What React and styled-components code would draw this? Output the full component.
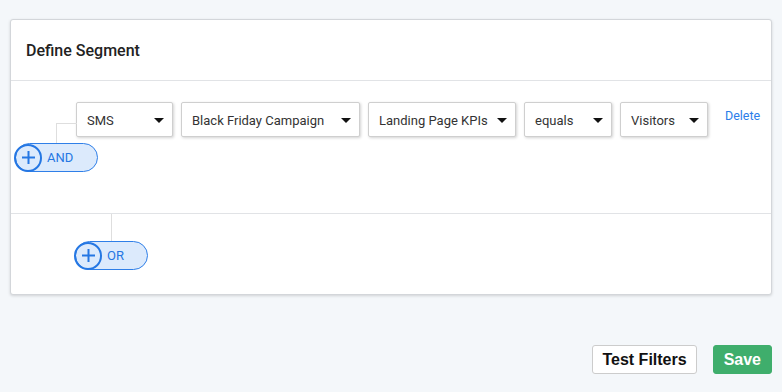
import React from 'react';
import styled, { createGlobalStyle } from 'styled-components';

const GlobalStyle = createGlobalStyle`
  body {
    margin: 0;
    background: #f4f7fa;
    font-family: Roboto, 'Liberation Sans', Arial, sans-serif;
  }
`;

const Page = styled.div`
  width: 782px;
  height: 392px;
  padding: 19px 10px 0;
  box-sizing: border-box;
`;

const Card = styled.div`
  background: #fff;
  border: 1px solid #d3d6da;
  border-radius: 3px;
  box-shadow: 0 1px 3px rgba(0, 0, 0, 0.15);
`;

const CardHeader = styled.div`
  height: 60px;
  display: flex;
  align-items: center;
  padding: 0 15px;
  border-bottom: 1px solid #e1e3e6;

  h2 {
    margin: 0;
    padding-top: 1px;
    font-size: 16px;
    font-weight: 500;
    color: #222;
  }
`;

const ConditionGroup = styled.div`
  padding: 21px 0 41px 4px;
  border-bottom: 1px solid #e1e3e6;
`;

const FilterRow = styled.div`
  position: relative;
  display: flex;
  align-items: flex-start;
  gap: 8px;
  margin-left: 61px;

  &::before {
    content: '';
    position: absolute;
    left: -20px;
    top: 21px;
    width: 20px;
    height: 20px;
    border-top: 1px solid #dedede;
    border-left: 1px solid #dedede;
  }
`;

const Select = styled.div`
  width: ${({ width }) => width}px;
  height: 35px;
  box-sizing: border-box;
  display: flex;
  align-items: center;
  justify-content: space-between;
  padding: 1px 8px 0 10px;
  border: 1px solid #cfcfcf;
  border-radius: 2px;
  background: #fff;
  box-shadow: 1px 1px 3px rgba(0, 0, 0, 0.18);
  font-size: 13px;
  color: #333;

  &::after {
    content: '';
    border-left: 5px solid transparent;
    border-right: 5px solid transparent;
    border-top: 5px solid #111;
  }
`;

const DeleteLink = styled.a`
  margin: 6px 0 0 9px;
  font-size: 12.5px;
  color: #2b7de9;
  cursor: pointer;
`;

const LogicButton = styled.button`
  position: relative;
  display: flex;
  align-items: center;
  gap: 5px;
  height: 29px;
  padding: 0 ${({ pad }) => pad}px 0 0;
  margin: ${({ margin }) => margin};
  border: 1px solid #2f7fe8;
  border-radius: 15px;
  background: #dceafc;
  color: #2577e3;
  font-family: Roboto, 'Liberation Sans', Arial, sans-serif;
  font-size: 13px;
  cursor: pointer;

  ${({ stem }) =>
    stem &&
    `
    &::before {
      content: '';
      position: absolute;
      left: 35px;
      top: -28px;
      width: 1px;
      height: 27px;
      background: #dedede;
    }
  `}
`;

const PlusCircle = styled.span`
  width: 28px;
  height: 28px;
  margin-left: -2px;
  box-sizing: border-box;
  border: 2px solid #2577e3;
  border-radius: 50%;
  display: flex;
  align-items: center;
  justify-content: center;
`;

const OrGroup = styled.div`
  padding: 27px 0 24px 64px;
`;

const Footer = styled.div`
  display: flex;
  justify-content: flex-end;
  gap: 16px;
  margin-top: 50px;
`;

const ActionButton = styled.button`
  height: 29px;
  padding: 0 ${({ primary }) => (primary ? 10 : 9)}px;
  border-radius: 3px;
  border: 1px solid ${({ primary }) => (primary ? '#3fae6c' : '#ccc')};
  background: ${({ primary }) => (primary ? '#3fae6c' : '#fff')};
  color: ${({ primary }) => (primary ? '#fff' : '#111')};
  font-family: 'Liberation Sans', Arial, sans-serif;
  font-size: 16px;
  font-weight: 700;
  cursor: pointer;
`;

const Plus = () => (
  <PlusCircle>
    <svg width="15" height="15" viewBox="0 0 15 15">
      <path d="M7.5 1v13M1 7.5h13" stroke="#2577e3" strokeWidth="2" fill="none" />
    </svg>
  </PlusCircle>
);

const filters = [
  { label: 'SMS', width: 97 },
  { label: 'Black Friday Campaign', width: 179 },
  { label: 'Landing Page KPIs', width: 148 },
  { label: 'equals', width: 88 },
  { label: 'Visitors', width: 88 },
];

const App = () => (
  <>
    <GlobalStyle />
    <Page>
      <Card>
        <CardHeader>
          <h2>Define Segment</h2>
        </CardHeader>
        <ConditionGroup>
          <FilterRow>
            {filters.map(f => (
              <Select key={f.label} width={f.width}>
                {f.label}
              </Select>
            ))}
            <DeleteLink>Delete</DeleteLink>
          </FilterRow>
          <LogicButton pad={24} margin="6px 0 0 0">
            <Plus />
            AND
          </LogicButton>
        </ConditionGroup>
        <OrGroup>
          <LogicButton pad={23} stem>
            <Plus />
            OR
          </LogicButton>
        </OrGroup>
      </Card>
      <Footer>
        <ActionButton>Test Filters</ActionButton>
        <ActionButton primary>Save</ActionButton>
      </Footer>
    </Page>
  </>
);

export default App;
